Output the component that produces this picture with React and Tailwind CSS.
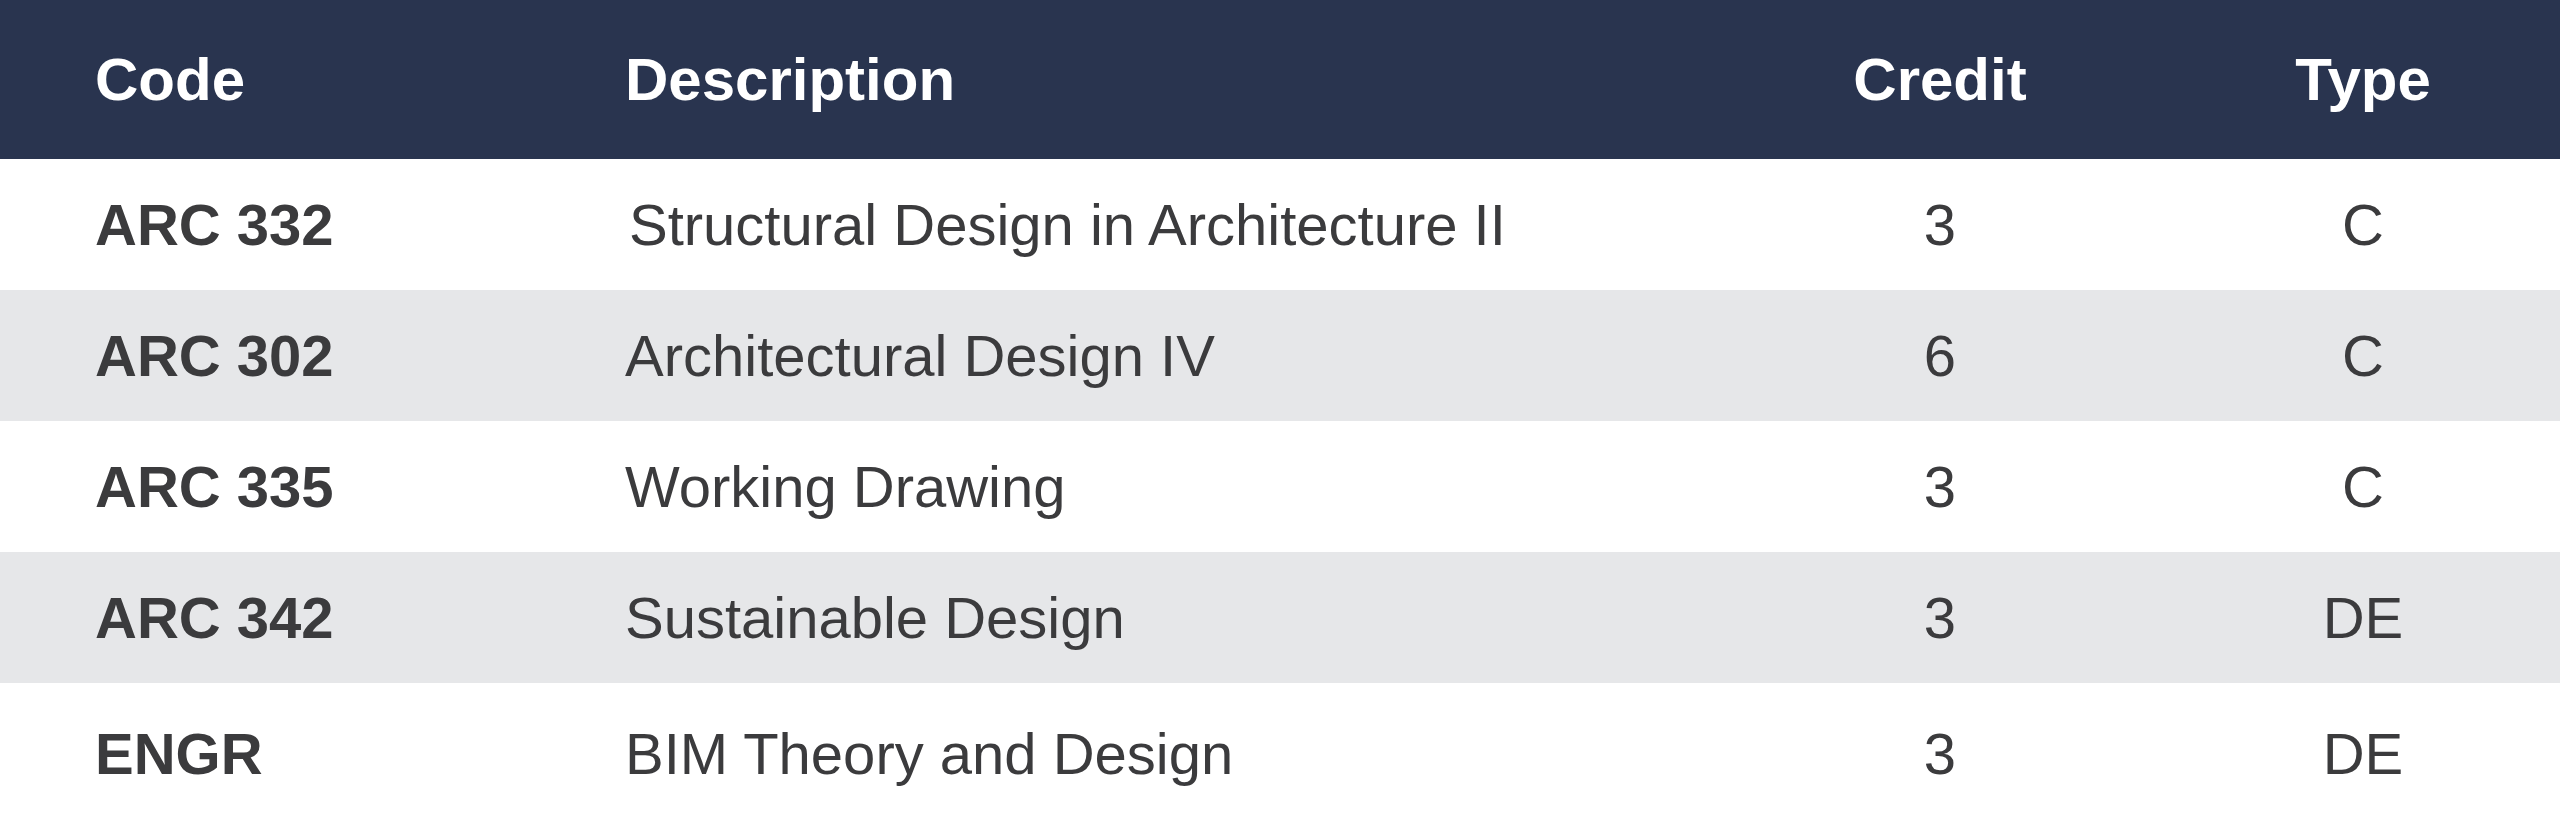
import React from "react";

const rows = [
  { code: "ARC 332", desc: "Structural Design in Architecture II", credit: "3", type: "C", bg: "bg-white", h: "h-[131px]", pad: "pl-[4px]" },
  { code: "ARC 302", desc: "Architectural Design IV", credit: "6", type: "C", bg: "bg-[#e6e7e9]", h: "h-[131px]", pad: "" },
  { code: "ARC 335", desc: "Working Drawing", credit: "3", type: "C", bg: "bg-white", h: "h-[131px]", pad: "" },
  { code: "ARC 342", desc: "Sustainable Design", credit: "3", type: "DE", bg: "bg-[#e6e7e9]", h: "h-[131px]", pad: "" },
  { code: "ENGR", desc: "BIM Theory and Design", credit: "3", type: "DE", bg: "bg-white", h: "h-[142px]", pad: "" },
];

export default function App() {
  return (
    <div className="w-[2560px] h-[814px] overflow-hidden bg-white font-['Liberation_Sans',Arial,Helvetica,sans-serif]">
      <div className="flex h-[159px] items-center bg-[#29344f] text-white font-bold text-[60px] leading-none">
        <div className="w-[625px] pl-[95px] shrink-0">Code</div>
        <div className="flex-1">Description</div>
        <div className="w-[452px] shrink-0 text-center">Credit</div>
        <div className="w-[394px] shrink-0 text-center">Type</div>
      </div>
      {rows.map((r) => (
        <div
          key={r.code + r.desc}
          className={`flex items-center ${r.h} ${r.bg} text-[#3b3b3d] text-[58px] leading-none`}
        >
          <div className="w-[625px] pl-[95px] shrink-0 font-bold">{r.code}</div>
          <div className={`flex-1 ${r.pad}`}>{r.desc}</div>
          <div className="w-[452px] shrink-0 text-center">{r.credit}</div>
          <div className="w-[394px] shrink-0 text-center">{r.type}</div>
        </div>
      ))}
    </div>
  );
}
